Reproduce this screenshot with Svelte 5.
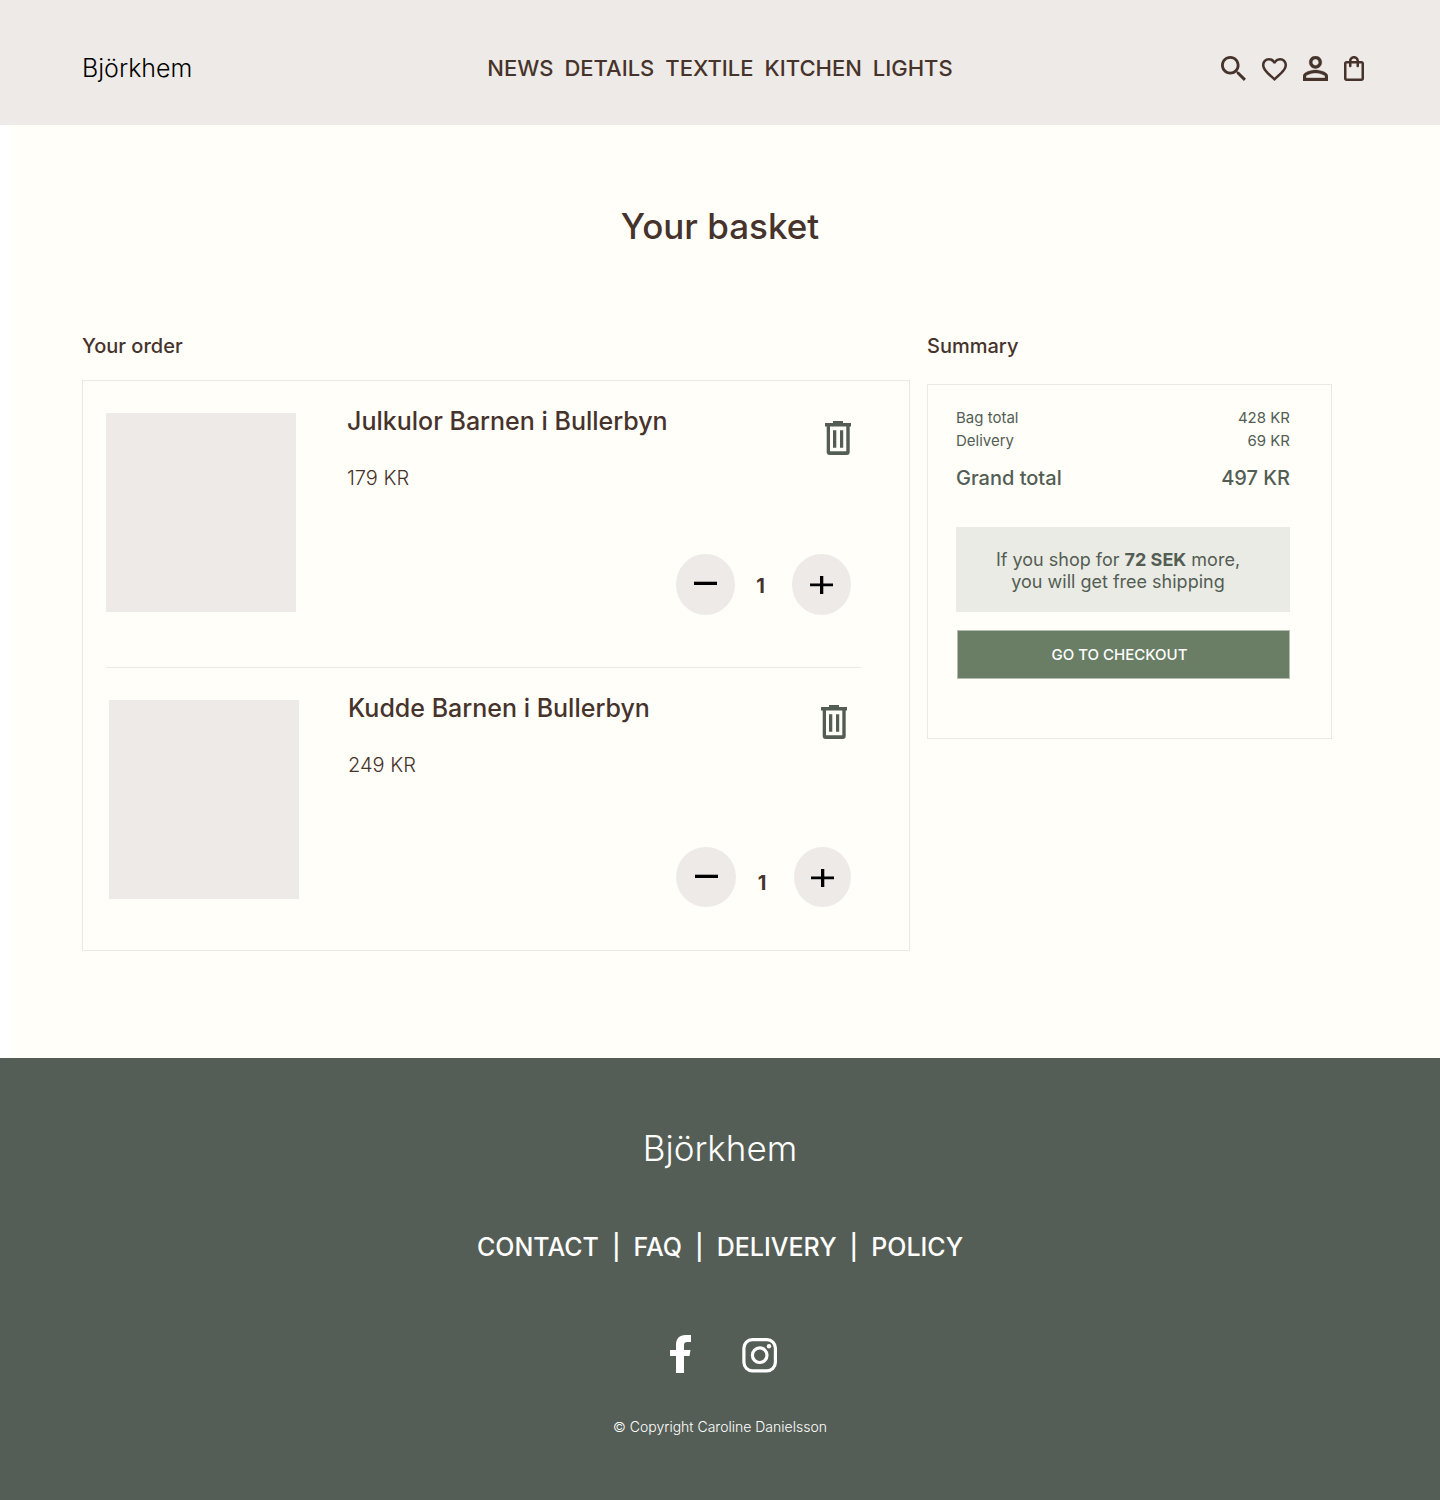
<script>
  const navLinks = ['NEWS', 'DETAILS', 'TEXTILE', 'KITCHEN', 'LIGHTS'];
  const footerLinks = ['CONTACT', 'FAQ', 'DELIVERY', 'POLICY'];
  const delivery = 69;

  let items = $state([
    { name: 'Julkulor Barnen i Bullerbyn', price: 179, quantity: 1 },
    { name: 'Kudde Barnen i Bullerbyn', price: 249, quantity: 1 }
  ]);

  let bagTotal = $derived(items.reduce((sum, item) => sum + item.price * item.quantity, 0));

  function remove(index) {
    items.splice(index, 1);
  }
</script>

<header class="site-header">
  <a class="brand" href="#home">Björkhem</a>
  <nav class="main-nav" aria-label="Main">
    {#each navLinks as link}
      <a href="#{link.toLowerCase()}">{link}</a>
    {/each}
  </nav>
  <div class="tools">
    <button type="button" aria-label="Search">
      <svg width="25" height="25" viewBox="3 3 17.5 17.5"><path d="M15.5 14h-.79l-.28-.27C15.41 12.59 16 11.11 16 9.5 16 5.91 13.09 3 9.5 3S3 5.91 3 9.5 5.91 16 9.5 16c1.61 0 3.09-.59 4.23-1.57l.27.28v.79l5 4.99L20.49 19l-4.99-5zm-6 0C7.01 14 5 11.99 5 9.5S7.01 5 9.5 5 14 7.01 14 9.5 11.99 14 9.5 14z" /></svg>
    </button>
    <button type="button" aria-label="Favourites">
      <svg width="25" height="23" viewBox="2 3 20 18.35"><path d="M16.5 3c-1.74 0-3.41.81-4.5 2.09C10.91 3.81 9.24 3 7.5 3 4.42 3 2 5.42 2 8.5c0 3.78 3.4 6.86 8.55 11.54L12 21.35l1.45-1.32C18.6 15.36 22 12.28 22 8.5 22 5.42 19.58 3 16.5 3zm-4.4 15.55l-.1.1-.1-.1C7.14 14.24 4 11.39 4 8.5 4 6.5 5.5 5 7.5 5c1.54 0 3.04.99 3.57 2.36h1.87C13.46 5.99 14.96 5 16.5 5c2 0 3.5 1.5 3.5 3.5 0 2.89-3.14 5.74-7.9 10.05z" /></svg>
    </button>
    <button type="button" aria-label="Account">
      <svg width="25" height="25" viewBox="4 4 16 16"><path d="M12 5.9c1.16 0 2.1.94 2.1 2.1s-.94 2.1-2.1 2.1S9.9 9.16 9.9 8s.94-2.1 2.1-2.1m0 9c2.97 0 6.1 1.46 6.1 2.1v1.1H5.9V17c0-.64 3.13-2.1 6.1-2.1M12 4C9.79 4 8 5.79 8 8s1.79 4 4 4 4-1.79 4-4-1.79-4-4-4zm0 9c-2.67 0-8 1.34-8 4v3h16v-3c0-2.66-5.33-4-8-4z" stroke="currentColor" stroke-width=".25" /></svg>
    </button>
    <button type="button" aria-label="Shopping bag">
      <svg width="20" height="25" viewBox="4 2 16 20"><path d="M18 6h-2c0-2.21-1.79-4-4-4S8 3.79 8 6H6c-1.1 0-2 .9-2 2v12c0 1.1.9 2 2 2h12c1.1 0 2-.9 2-2V8c0-1.1-.9-2-2-2zm-6-2c1.1 0 2 .9 2 2h-4c0-1.1.9-2 2-2zm6 16H6V8h2v2c0 .55.45 1 1 1s1-.45 1-1V8h4v2c0 .55.45 1 1 1s1-.45 1-1V8h2v12z" /></svg>
    </button>
  </div>
</header>

<main>
  <h1>Your basket</h1>
  <div class="columns">
    <section class="order">
      <h2>Your order</h2>
      <ul class="items">
        {#each items as item, index}
          <li class="item">
            <div class="thumb"></div>
            <div class="info">
              <h3>{item.name}</h3>
              <p>{item.price} KR</p>
            </div>
            <button class="remove" type="button" aria-label="Remove {item.name}" onclick={() => remove(index)}>
              <svg width="26" height="34" viewBox="0 0 26 34"><path d="M8 0h10v2h8v3.5h-1.3V31a3 3 0 0 1-3 3H4.7a3 3 0 0 1-3-3V5.5H0V2h8zM5 5.5V30.3h16.3V5.5zM8 9.3h3.3v17.4H8zM15 9.3h3.2v17.4H15z" fill-rule="evenodd" /></svg>
            </button>
            <div class="stepper">
              <button type="button" aria-label="Decrease quantity" onclick={() => (item.quantity = Math.max(1, item.quantity - 1))}>
                <svg width="23" height="19" viewBox="0 0 23 19"><path d="M0 6.7h23v3.3H0z" /></svg>
              </button>
              <output>{item.quantity}</output>
              <button type="button" aria-label="Increase quantity" onclick={() => (item.quantity += 1)}>
                <svg width="23" height="19" viewBox="0 0 23 19"><path d="M10 1h3.3v7.6H23v2.6h-9.700V19H10v-7.800H0V8.600h10z" /></svg>
              </button>
            </div>
          </li>
        {/each}
      </ul>
    </section>

    <section class="summary">
      <h2>Summary</h2>
      <div class="summary-card">
        <dl>
          <div><dt>Bag total</dt><dd>{bagTotal} KR</dd></div>
          <div><dt>Delivery</dt><dd>{delivery} KR</dd></div>
          <div class="grand"><dt>Grand total</dt><dd>{bagTotal + delivery} KR</dd></div>
        </dl>
        <p class="notice">If you shop for <strong>72 SEK</strong> more,<br />you will get free shipping</p>
        <button class="checkout" type="button">GO TO CHECKOUT</button>
      </div>
    </section>
  </div>
</main>

<footer>
  <a class="footer-brand" href="#home">Björkhem</a>
  <nav class="footer-nav" aria-label="Footer">
    {#each footerLinks as link, index}
      {#if index > 0}<span aria-hidden="true">|</span>{/if}
      <a href="#{link.toLowerCase()}">{link}</a>
    {/each}
  </nav>
  <div class="social">
    <a href="#facebook" aria-label="Facebook">
      <svg width="21" height="38" viewBox="0 0 21 38"><path d="M6 38V21H0v-6h6V10C6 3.5 9.5 0 15.5 0H21v7h-3.5C15 7 14 8 14 10v5h6.5l-1 6H14v17z" /></svg>
    </a>
    <a href="#instagram" aria-label="Instagram">
      <svg width="35" height="35" viewBox="0 0 35 35"><rect x="1.9" y="1.6" width="31.5" height="31.2" rx="8.5" class="line" /><circle cx="17.7" cy="17.2" r="7.3" class="line" /><circle cx="27" cy="8.2" r="2.2" /></svg>
    </a>
  </div>
  <small>© Copyright Caroline Danielsson</small>
</footer>

<style>
  :global(body) {
    margin: 0;
    background: #fffef9;
    color: #46332b;
    font-family: Inter, sans-serif;
    font-size: 20px;
  }

  h1, h2, h3, p, ul, dl, dd {
    margin: 0;
    padding: 0;
    font-weight: 500;
  }

  a {
    color: inherit;
    text-decoration: none;
  }

  button {
    padding: 0;
    border: 0;
    background: none;
    color: inherit;
    font: inherit;
    cursor: pointer;
  }

  svg {
    display: block;
    fill: currentColor;
  }

  .site-header {
    display: grid;
    grid-template-columns: 1fr auto 1fr;
    align-items: center;
    min-height: 113px;
    padding: 12px 76px 0;
    background: #eeeae7;
  }

  .brand {
    padding: 0 0 2px 6px;
    color: #000;
    font-size: 25px;
    font-weight: 300;
  }

  .main-nav {
    display: flex;
    gap: 11px;
    padding-bottom: 2px;
    font-size: 22px;
    font-weight: 500;
  }

  .tools {
    display: flex;
    justify-content: flex-end;
    align-items: flex-end;
    gap: 16px;
  }

  main {
    padding: 80px 108px 107px 71px;
    border-left: 11px solid #fff;
  }

  h1 {
    margin: 0 0 87px 26px;
    text-align: center;
    font-size: 35px;
    line-height: 42px;
  }

  .columns {
    display: grid;
    grid-template-columns: 828fr 405fr;
    align-items: start;
    gap: 17px;
  }

  h2 {
    font-size: 20px;
    line-height: 24px;
  }

  .items {
    margin-top: 22px;
    padding: 0 48px 0 23px;
    border: 1px solid #e9e9e5;
    list-style: none;
  }

  .item {
    display: grid;
    grid-template-columns: 190px 1fr auto;
    grid-template-rows: auto 1fr;
    column-gap: 51px;
    min-height: 210px;
    padding: 24px 10px 52px 0;
  }

  .item + .item {
    column-gap: 49px;
    min-height: 215px;
    padding: 24px 10px 43px 3px;
    border-top: 1px solid #e9e9e5;
  }

  .thumb {
    grid-row: 1 / 3;
    height: 199px;
    margin-top: 8px;
    background: #eeeae7;
  }

  h3 {
    font-size: 25px;
    line-height: 32px;
  }

  .info p {
    margin-top: 29px;
    font-size: 20px;
    font-weight: 300;
    line-height: 24px;
  }

  .remove {
    align-self: start;
    margin-top: 16px;
    color: #535d54;
  }

  .item + .item .remove {
    margin: 13px 4px 0 0;
  }

  .stepper {
    grid-column: 2 / 4;
    align-self: end;
    justify-self: end;
    display: flex;
    align-items: flex-end;
  }

  .stepper button {
    display: grid;
    place-items: center;
    width: 59px;
    height: 61px;
    border-radius: 50%;
    background: #eeeae7;
    color: #000;
  }

  .stepper output {
    width: 51px;
    padding-right: 6px;
    text-align: center;
    font-size: 20px;
    font-weight: 700;
    line-height: 58px;
  }

  .item + .item .stepper button {
    width: 60px;
    height: 60px;
  }

  .item + .item .stepper button:last-child {
    width: 57px;
  }

  .item + .item output {
    width: 52px;
    line-height: 48px;
  }

  .summary-card {
    margin-top: 26px;
    padding: 21px 41px 59px 28px;
    border: 1px solid #e9e9e5;
    color: #535d54;
  }

  dl div {
    display: flex;
    justify-content: space-between;
    font-size: 15px;
    line-height: 23px;
  }

  dl div, dl dd {
    font-weight: 400;
  }

  dl .grand, dl .grand dd {
    font-size: 20px;
    font-weight: 500;
    line-height: 24px;
  }

  .grand {
    margin-top: 14px;
  }

  .notice {
    margin-top: 37px;
    padding: 22px 10px 19px 0;
    background: #eaebe4;
    text-align: center;
    font-size: 18px;
    font-weight: 400;
    line-height: 22px;
  }

  .checkout {
    display: block;
    width: calc(100% - 1px);
    height: 49px;
    margin: 18px 0 0 1px;
    padding-right: 8px;
    border: 1px solid #b4beb0;
    background: #697e65;
    color: #fff;
    font-size: 15px;
    font-weight: 500;
  }

  footer {
    display: flex;
    flex-direction: column;
    align-items: center;
    padding: 69px 24px 63px;
    background: #555e56;
    color: #fff;
  }

  .footer-brand {
    font-size: 35px;
    font-weight: 300;
    line-height: 42px;
  }

  .footer-nav {
    display: flex;
    gap: 13px;
    margin-top: 62px;
    font-size: 25px;
    font-weight: 500;
    line-height: 32px;
  }

  .social {
    display: flex;
    align-items: flex-end;
    gap: 51px;
    margin-top: 72px;
    padding-left: 7px;
  }

  .line {
    fill: none;
    stroke: currentColor;
    stroke-width: 3.2;
  }

  small {
    margin-top: 44px;
    font-size: 14px;
    font-weight: 300;
    line-height: 20px;
  }
</style>
